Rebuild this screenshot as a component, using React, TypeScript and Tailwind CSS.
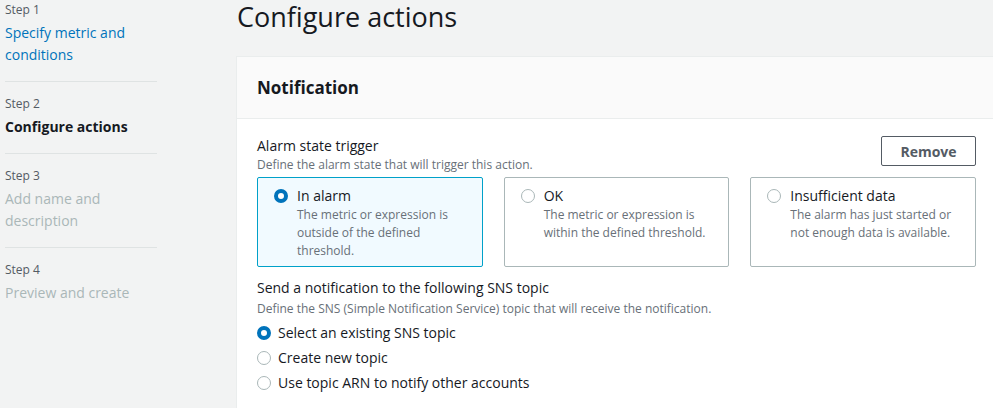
import React from 'react';

type Step = { label: string; title: string[]; state: 'done' | 'current' | 'todo' };

const steps: Step[] = [
  { label: 'Step 1', title: ['Specify metric and', 'conditions'], state: 'done' },
  { label: 'Step 2', title: ['Configure actions'], state: 'current' },
  { label: 'Step 3', title: ['Add name and', 'description'], state: 'todo' },
  { label: 'Step 4', title: ['Preview and create'], state: 'todo' },
];

const tiles = [
  { title: 'In alarm', desc: 'The metric or expression is outside of the defined threshold.', checked: true },
  { title: 'OK', desc: 'The metric or expression is within the defined threshold.', checked: false },
  { title: 'Insufficient data', desc: 'The alarm has just started or not enough data is available.', checked: false },
];

const topics = [
  { label: 'Select an existing SNS topic', checked: true },
  { label: 'Create new topic', checked: false },
  { label: 'Use topic ARN to notify other accounts', checked: false },
];

const Radio: React.FC<{ checked: boolean }> = ({ checked }) =>
  checked ? (
    <span className="block h-[14px] w-[14px] shrink-0 rounded-full border-[4px] border-[#0073bb] bg-white" />
  ) : (
    <span className="block h-[14px] w-[14px] shrink-0 rounded-full border-[1.5px] border-[#aab7b8] bg-white" />
  );

export default function App() {
  return (
    <div className="flex min-h-screen bg-[#f2f3f3] font-['Open_Sans',sans-serif] text-[#16191f]">
      {/* Wizard steps */}
      <nav className="w-[236px] shrink-0 pl-[5px]">
        <ul className="w-[152px]">
          {steps.map((s, i) => (
            <li
              key={s.label}
              className={
                (i < steps.length - 1 ? 'border-b border-[#dfe3e3] pb-[15px] ' : '') + (i > 0 ? 'pt-[13px]' : 'pt-px')
              }
            >
              <div className="text-[12px] leading-[18px] text-[#545b64]">{s.label}</div>
              <div
                className={
                  'mt-[3px] text-[14px] leading-[22px] ' +
                  (s.state === 'done'
                    ? 'text-[#0073bb]'
                    : s.state === 'current'
                    ? 'font-bold text-[#16191f]'
                    : 'text-[#aab7b8]')
                }
              >
                {s.title.map((t) => (
                  <div key={t}>{t}</div>
                ))}
              </div>
            </li>
          ))}
        </ul>
      </nav>

      <main className="flex-1">
        <h1 className="pl-px text-[27px] leading-[34px] font-normal">Configure actions</h1>

        <section className="mt-[22px] border-t border-l border-[#eaeded] bg-white">
          <header className="flex h-[62px] items-center border-b border-[#eaeded] bg-[#fafafa] px-5">
            <h2 className="text-[17px] font-bold">Notification</h2>
          </header>

          <div className="pt-[17px] pr-[17px] pb-6 pl-5">
            <div className="flex items-start justify-between">
              <div>
                <div className="text-[14px] leading-[20px]">Alarm state trigger</div>
                <div className="mt-px text-[12px] leading-[16px] text-[#687078]">
                  Define the alarm state that will trigger this action.
                </div>
              </div>
              <button className="h-[30px] w-[95px] rounded-[2px] border border-[#545b64] bg-white text-[14px] font-bold text-[#545b64]">
                Remove
              </button>
            </div>

            <div className="mt-[4px] grid grid-cols-3 gap-[21px]">
              {tiles.map((t) => (
                <label
                  key={t.title}
                  className={
                    'flex h-[90px] gap-[9px] rounded-[2px] border pt-[8px] pr-[22px] pl-[16px] ' +
                    (t.checked ? 'border-[#00a1c9] bg-[#f1faff]' : 'border-[#aab7b8] bg-white')
                  }
                >
                  <span className="mt-[3px]">
                    <Radio checked={t.checked} />
                  </span>
                  <span>
                    <span className="block text-[14px] leading-[20px]">{t.title}</span>
                    <span className="block text-[12px] leading-[18px] text-[#687078]">{t.desc}</span>
                  </span>
                </label>
              ))}
            </div>

            <div className="mt-[11px] text-[14px] leading-[20px]">Send a notification to the following SNS topic</div>
            <div className="mt-px text-[12px] leading-[20px] text-[#687078]">
              Define the SNS (Simple Notification Service) topic that will receive the notification.
            </div>
            <div className="mt-px">
              {topics.map((o) => (
                <label key={o.label} className="flex h-[25px] items-center gap-[7px]">
                  <Radio checked={o.checked} />
                  <span className="text-[14px] leading-[20px]">{o.label}</span>
                </label>
              ))}
            </div>
          </div>
        </section>
      </main>
    </div>
  );
}
